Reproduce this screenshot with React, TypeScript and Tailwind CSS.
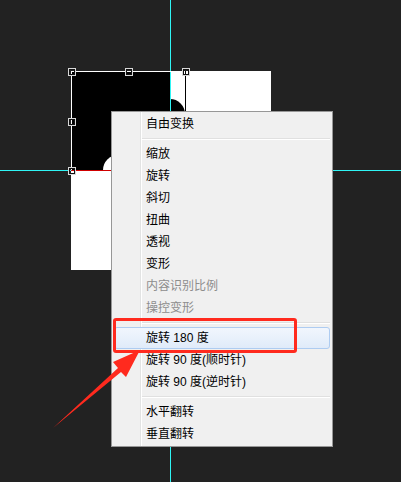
import React from 'react'

type Item = { label: string; disabled?: boolean; active?: boolean } | 'sep'

const menu: Item[] = [
  { label: '自由变换' },
  'sep',
  { label: '缩放' },
  { label: '旋转' },
  { label: '斜切' },
  { label: '扭曲' },
  { label: '透视' },
  { label: '变形' },
  { label: '内容识别比例', disabled: true },
  { label: '操控变形', disabled: true },
  'sep',
  { label: '旋转 180 度', active: true },
  { label: '旋转 90 度(顺时针)' },
  { label: '旋转 90 度(逆时针)' },
  'sep',
  { label: '水平翻转' },
  { label: '垂直翻转' },
]

function Handle({ x, y }: { x: number; y: number }) {
  return (
    <g>
      <rect x={x - 3.5} y={y - 3.5} width={7} height={7} fill="none" stroke="#d8d8d8" strokeWidth={1} />
      <rect x={x - 2.5} y={y - 2.5} width={5} height={5} fill="none" stroke="#111" strokeWidth={1} />
    </g>
  )
}

export default function App() {
  return (
    <div
      className="relative w-[401px] h-[482px] overflow-hidden bg-[#222222]"
      style={{ fontFamily: '"Liberation Sans", "Noto Sans CJK SC", sans-serif' }}
    >
      {/* canvas, guides and transform box */}
      <svg className="absolute inset-0" width={401} height={482} shapeRendering="crispEdges">
        <rect x={71} y={71} width={200} height={199} fill="#fff" />
        <rect x={71} y={71} width={99} height={99} fill="#000" />
        <circle cx={170} cy={114} r={15} fill="#000" shapeRendering="auto" />
        <circle cx={118} cy={170} r={15} fill="#fff" shapeRendering="auto" />

        <line x1={170.5} y1={0} x2={170.5} y2={482} stroke="#2ff5f5" strokeWidth={1} />
        <line x1={0} y1={170.5} x2={401} y2={170.5} stroke="#2ff5f5" strokeWidth={1} />

        <line x1={71} y1={71.5} x2={185} y2={71.5} stroke="#fff" strokeWidth={1} />
        <line x1={71.5} y1={71} x2={71.5} y2={170} stroke="#fff" strokeWidth={1} />
        <line x1={185.5} y1={71} x2={185.5} y2={170} stroke="#000" strokeWidth={1} />
        <line x1={71} y1={170.5} x2={186} y2={170.5} stroke="#d00000" strokeWidth={1} />

        <Handle x={71.5} y={71.5} />
        <Handle x={128.5} y={71.5} />
        <Handle x={185.5} y={71.5} />
        <Handle x={71.5} y={121.5} />
        <Handle x={71.5} y={170.5} />
      </svg>

      {/* context menu */}
      <div className="absolute left-[111px] top-[111px] w-[222px] border border-[#979797] bg-[#f0f0f0] py-[1px] text-[12px] text-black">
        {/* icon gutter line */}
        <div className="absolute left-[28px] top-0 bottom-0 w-[2px] border-l border-[#e2e3e3] bg-white" />
        {menu.map((item, i) =>
          item === 'sep' ? (
            <div key={i} className="relative h-[8px] pl-[30px] pr-[2px] pt-[3px]">
              <div className="h-[1px] bg-[#e0e0e0]" />
              <div className="h-[1px] bg-white" />
            </div>
          ) : (
            <div
              key={i}
              className={
                item.active
                  ? 'relative mx-[2px] flex h-[22px] items-center rounded-[3px] border border-[#aeccf1] bg-gradient-to-b from-[#f1f6fd] to-[#e0ebf9] pl-[31px]'
                  : 'relative mx-[2px] flex h-[22px] items-center pl-[32px]'
              }
            >
              <span className={item.disabled ? 'text-[#8d8d8d]' : 'text-black'}>{item.label}</span>
            </div>
          )
        )}
      </div>

      {/* red annotation box */}
      <div className="absolute left-[113px] top-[318px] h-[35px] w-[184px] rounded-[3px] border-[3px] border-[#ff2a1e]" />

      {/* red arrow */}
      <svg className="absolute inset-0 pointer-events-none" width={401} height={482}>
        <polygon points="53,428 118,368 113,362 140,350 126,377 121,372" fill="#ff2a1e" />
      </svg>
    </div>
  )
}
